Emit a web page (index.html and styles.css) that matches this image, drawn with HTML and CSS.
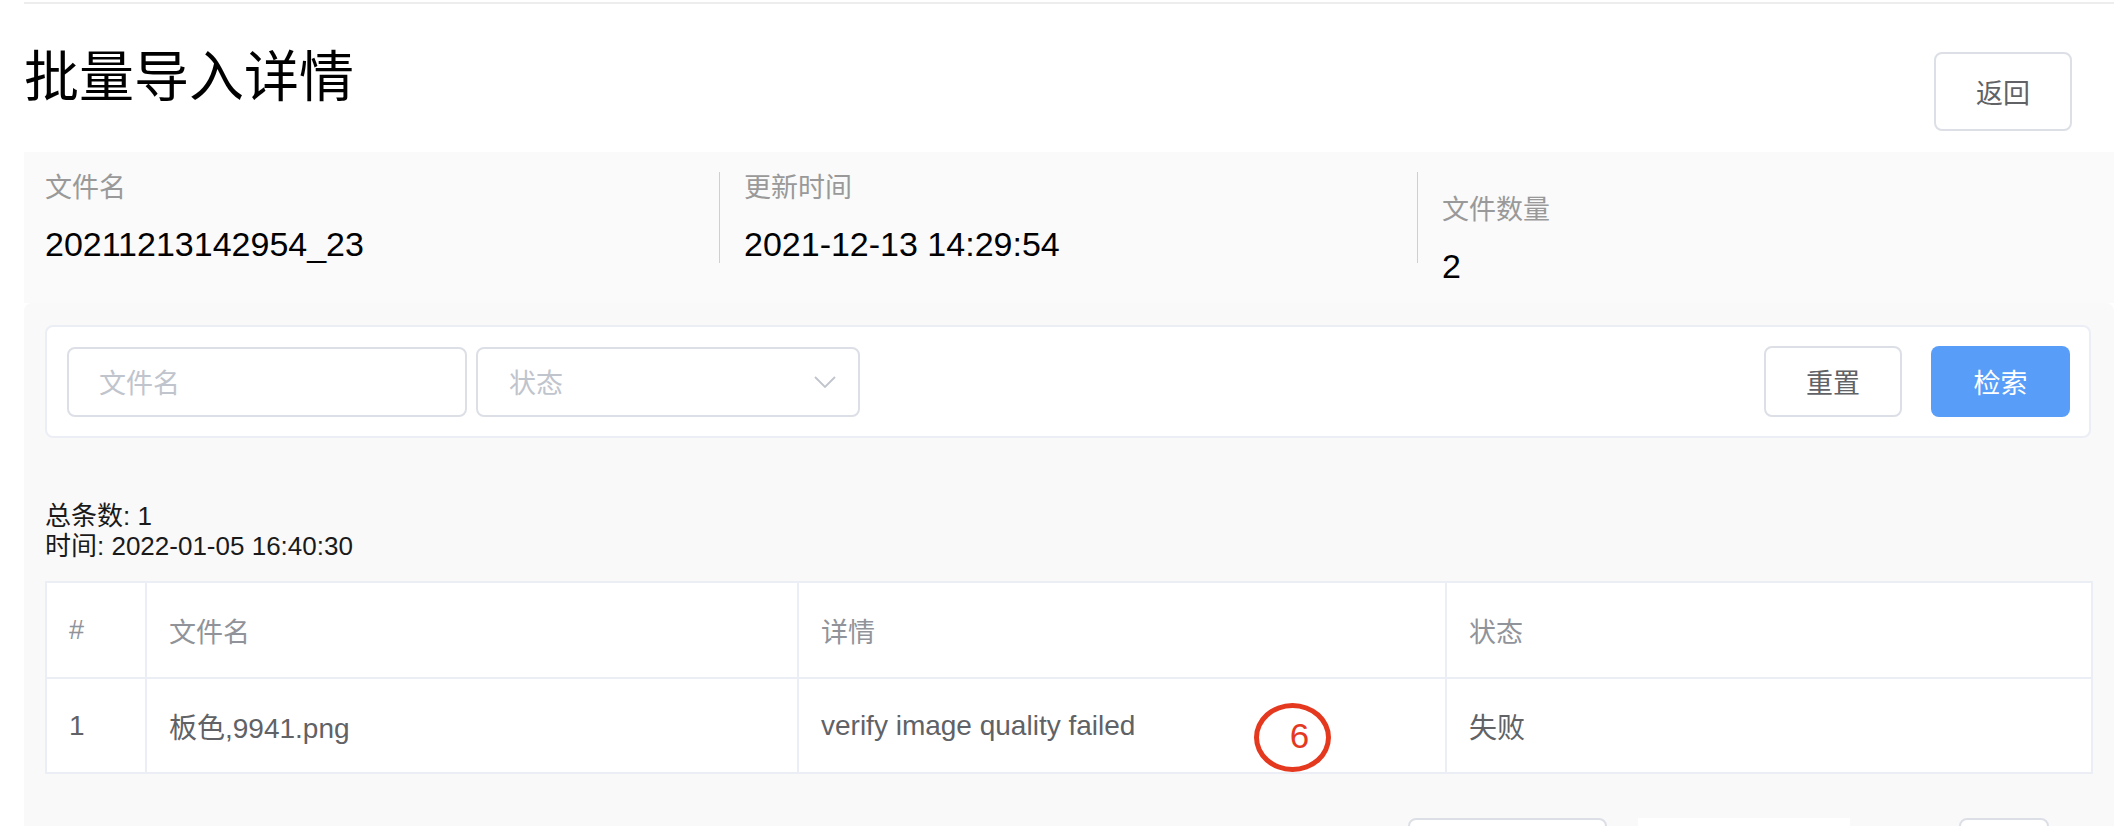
FILE: index.html
```html
<!DOCTYPE html>
<html lang="zh-CN">
<head>
<meta charset="utf-8">
<title>批量导入详情</title>
<link rel="stylesheet" href="styles.css">
</head>
<body>
<div class="page">
  <div class="topline"></div>
  <div class="header">
    <h1 class="title">批量导入详情</h1>
    <button class="btn back-btn">返回</button>
  </div>

  <div class="info">
    <div class="info-col">
      <div class="info-label">文件名</div>
      <div class="info-value">20211213142954_23</div>
    </div>
    <div class="info-col divided">
      <div class="info-label">更新时间</div>
      <div class="info-value">2021-12-13 14:29:54</div>
    </div>
    <div class="info-col divided shifted">
      <div class="info-label">文件数量</div>
      <div class="info-value">2</div>
    </div>
  </div>

  <div class="panel">
    <div class="search-card">
      <div class="field field-input"><span class="placeholder">文件名</span></div>
      <div class="field field-select">
        <span class="placeholder">状态</span>
        <svg class="chevron" width="22" height="12" viewBox="0 0 22 12"><polyline points="1,1 11,11 21,1" fill="none" stroke="#c0c4cc" stroke-width="1.8"/></svg>
      </div>
      <div class="actions">
        <button class="btn reset-btn">重置</button>
        <button class="btn primary-btn">检索</button>
      </div>
    </div>

    <div class="stats">
      <div>总条数: 1</div>
      <div>时间: 2022-01-05 16:40:30</div>
    </div>

    <table class="grid">
      <colgroup>
        <col class="c1"><col class="c2"><col class="c3"><col class="c4">
      </colgroup>
      <thead>
        <tr><th>#</th><th>文件名</th><th>详情</th><th>状态</th></tr>
      </thead>
      <tbody>
        <tr>
          <td>1</td>
          <td>板色,9941.png</td>
          <td class="detail-cell">verify image quality failed<span class="mark">6</span></td>
          <td>失败</td>
        </tr>
      </tbody>
    </table>

    <div class="pager">
      <div class="pg-box pg-size"></div>
      <div class="pg-list"></div>
      <div class="pg-box pg-goto"></div>
    </div>
  </div>
</div>
</body>
</html>
```

FILE: styles.css
```css
html, body {
  margin: 0;
  padding: 0;
  height: 100%;
  overflow: hidden;
  background: #ffffff;
}

body {
  font-family: "Liberation Sans", "Noto Sans CJK SC", sans-serif;
  color: #000;
}

.page {
  margin: 0 10px 0 24px;
  padding-top: 2px;
}

.topline {
  height: 2px;
  background: #ededed;
}

.header {
  display: flex;
  justify-content: space-between;
  align-items: flex-start;
  height: 148px;
}

.title {
  margin: 38px 0 0 0;
  font-family: "Noto Sans CJK SC", sans-serif;
  font-size: 55px;
  line-height: 60px;
  font-weight: normal;
  color: #000;
}

.btn {
  font-family: "Liberation Sans", "Noto Sans CJK SC", sans-serif;
  font-size: 27px;
  border-radius: 8px;
  cursor: pointer;
  padding: 0;
}

.back-btn {
  margin-top: 48px;
  margin-right: 42px;
  width: 138px;
  height: 79px;
  border: 2px solid #dcdfe6;
  background: #fff;
  color: #606266;
}

.info {
  display: grid;
  grid-template-columns: 695px 698px 1fr;
  height: 151px;
  box-sizing: border-box;
  padding-top: 20px;
  background: #fafafa;
}

.info-col {
  height: 91px;
  padding-left: 21px;
}

.info-col.divided {
  border-left: 1px solid #cfcfcf;
  padding-left: 24px;
}

.info-col.shifted .info-label {
  margin-top: 22px;
}

.info-label {
  font-size: 27px;
  line-height: 32px;
  color: #999999;
}

.info-value {
  margin-top: 20px;
  font-size: 34px;
  line-height: 40px;
  color: #000;
}

.panel {
  background: #f9f9fa;
  border-radius: 8px 8px 0 0;
  padding: 22px 23px 0 21px;
  height: 600px;
}

.search-card {
  display: flex;
  align-items: center;
  height: 113px;
  box-sizing: border-box;
  padding: 0 19px 0 20px;
  background: #fff;
  border: 2px solid #ebeef5;
  border-radius: 8px;
}

.field {
  display: flex;
  align-items: center;
  height: 70px;
  box-sizing: border-box;
  border: 2px solid #dcdfe6;
  border-radius: 8px;
  background: #fff;
}

.field-input {
  width: 400px;
  padding-left: 30px;
}

.field-select {
  width: 384px;
  margin-left: 9px;
  padding-left: 31px;
  padding-right: 22px;
  justify-content: space-between;
}

.placeholder {
  font-size: 27px;
  color: #c0c4cc;
}

.chevron {
  display: block;
}

.actions {
  margin-left: auto;
  display: flex;
  gap: 29px;
}

.reset-btn {
  width: 138px;
  height: 71px;
  border: 2px solid #dcdfe6;
  background: #fff;
  color: #606266;
}

.primary-btn {
  width: 139px;
  height: 71px;
  border: none;
  background: #589ef8;
  color: #fff;
}

.stats {
  margin-top: 63px;
  font-size: 26px;
  line-height: 30px;
  color: #1a1a1a;
}

.grid {
  margin-top: 20px;
  width: 2046px;
  border-collapse: collapse;
  table-layout: fixed;
  background: #fff;
}

.grid col.c1 { width: 100px; }
.grid col.c2 { width: 652px; }
.grid col.c3 { width: 648px; }
.grid col.c4 { width: 646px; }

.grid th,
.grid td {
  border: 2px solid #ebeef5;
  text-align: left;
  padding: 0 0 0 22px;
}

.grid th {
  height: 94px;
  font-size: 27px;
  font-weight: normal;
  color: #909399;
}

.grid td {
  height: 93px;
  font-size: 28px;
  color: #606266;
}

.detail-cell {
  position: relative;
}

.mark {
  position: absolute;
  left: 455px;
  top: 24px;
  width: 77px;
  height: 69px;
  box-sizing: border-box;
  border: 5px solid #e5391f;
  border-radius: 50%;
  color: #e5391f;
  font-size: 35px;
  line-height: 56px;
  text-align: center;
  padding-left: 14px;
}

.pager {
  display: flex;
  justify-content: flex-end;
  align-items: flex-start;
  margin-top: 44px;
  padding-right: 42px;
}

.pg-box {
  height: 70px;
  box-sizing: border-box;
  border: 2px solid #dcdfe6;
  border-radius: 8px;
  background: #fff;
}

.pg-size {
  width: 199px;
}

.pg-list {
  width: 212px;
  height: 70px;
  margin-left: 31px;
  background: #fff;
}

.pg-goto {
  width: 90px;
  margin-left: 109px;
}
```
